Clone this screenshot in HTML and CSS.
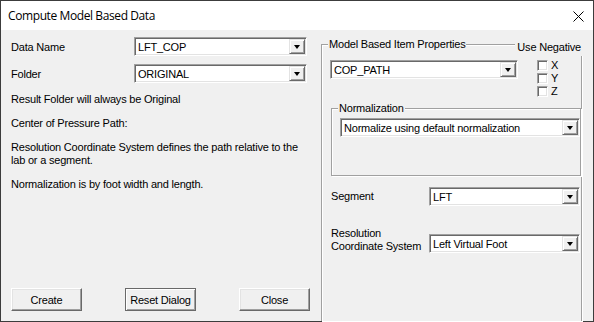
FILE: index.html
```html
<!DOCTYPE html>
<html lang="en">
<head>
    <meta charset="UTF-8">
    <title>Compute Model Based Data</title>
    <link rel="stylesheet" href="styles.css">
</head>
<body>
    <div class="dialog">
        <div class="titlebar">
            <span class="title">Compute Model Based Data</span>
            <svg class="close-icon" width="11" height="11" viewBox="0 0 11 11">
                <path d="M0.5 0.5 L10.5 10.5 M10.5 0.5 L0.5 10.5" stroke="#000" stroke-width="1" fill="none"/>
            </svg>
        </div>

        <div class="dialog-body">
            <div class="left-panel">
                <div class="field-row">
                    <span class="field-label">Data Name</span>
                    <div class="combo data-combo">
                        <span class="combo-text">LFT_COP</span>
                        <span class="combo-btn"><i class="arrow"></i></span>
                    </div>
                </div>
                <div class="field-row">
                    <span class="field-label">Folder</span>
                    <div class="combo data-combo">
                        <span class="combo-text">ORIGINAL</span>
                        <span class="combo-btn"><i class="arrow"></i></span>
                    </div>
                </div>

                <p class="note first">Result Folder will always be Original</p>
                <p class="note">Center of Pressure Path:</p>
                <p class="note">Resolution Coordinate System defines the path relative to the lab or a segment.</p>
                <p class="note">Normalization is by foot width and length.</p>

                <div class="buttons">
                    <button class="btn">Create</button>
                    <button class="btn btn-default">Reset Dialog</button>
                    <button class="btn">Close</button>
                </div>
            </div>

            <div class="group main-group">
                <span class="legend">Model Based Item Properties</span>
                <span class="use-negative">Use Negative</span>

                <div class="top-row">
                    <div class="combo item-combo">
                        <span class="combo-text">COP_PATH</span>
                        <span class="combo-btn"><i class="arrow"></i></span>
                    </div>
                    <div class="checks">
                        <label class="check"><span class="box"></span>X</label>
                        <label class="check"><span class="box"></span>Y</label>
                        <label class="check"><span class="box"></span>Z</label>
                    </div>
                </div>

                <div class="group norm-group">
                    <span class="legend">Normalization</span>
                    <div class="combo norm-combo">
                        <span class="combo-text">Normalize using default normalization</span>
                        <span class="combo-btn"><i class="arrow"></i></span>
                    </div>
                </div>

                <div class="prop-row segment-row">
                    <span class="prop-label">Segment</span>
                    <div class="combo prop-combo">
                        <span class="combo-text">LFT</span>
                        <span class="combo-btn"><i class="arrow"></i></span>
                    </div>
                </div>

                <div class="prop-row resolution-row">
                    <span class="prop-label">Resolution<br>Coordinate System</span>
                    <div class="combo prop-combo">
                        <span class="combo-text">Left Virtual Foot</span>
                        <span class="combo-btn"><i class="arrow"></i></span>
                    </div>
                </div>
            </div>
        </div>
    </div>
</body>
</html>
```

FILE: styles.css
```css
* {
    margin: 0;
    padding: 0;
    box-sizing: border-box;
}

body {
    background: #ffffff;
    font-family: "Liberation Sans", Arial, sans-serif;
    font-size: 11px;
    letter-spacing: -0.2px;
    color: #000;
}

.dialog {
    width: 594px;
    height: 322px;
    border: 1px solid #3c3c3c;
    display: flex;
    flex-direction: column;
    background: #f0f0f0;
}

.titlebar {
    height: 29px;
    background: #ffffff;
    display: flex;
    align-items: center;
    justify-content: space-between;
    padding: 0 9px 0 7px;
}

.title {
    font-family: "Open Sans", "Noto Sans", sans-serif;
    font-size: 12px;
    letter-spacing: -0.4px;
}

.close-icon {
    display: block;
    margin-top: 1px;
}

.dialog-body {
    flex: 1;
    display: flex;
}

/* left side */

.left-panel {
    width: 320px;
    padding: 7px 0 10px 10px;
    display: flex;
    flex-direction: column;
}

.field-row {
    display: flex;
    align-items: center;
    margin-bottom: 8px;
}

.field-label {
    width: 123px;
}

.note {
    line-height: 13px;
    width: 300px;
    margin-top: 11px;
}

.note.first {
    margin-top: 2px;
}

.buttons {
    margin-top: auto;
    display: flex;
    gap: 43px;
}

.btn {
    width: 71px;
    height: 23px;
    font-family: inherit;
    font-size: 11px;
    letter-spacing: -0.2px;
    background: #f0f0f0;
    border: 1px solid;
    border-color: #ffffff #696969 #696969 #ffffff;
    box-shadow: inset -1px -1px 0 #a0a0a0, inset 1px 1px 0 #e3e3e3;
    color: #000;
}

.btn-default {
    border-color: #696969;
    box-shadow: inset 1px 1px 0 #ffffff, inset -1px -1px 0 #a0a0a0;
}

/* combo boxes */

.combo {
    height: 19px;
    background: #ffffff;
    border: 1px solid;
    border-color: #a0a0a0 #ffffff #ffffff #a0a0a0;
    box-shadow: inset 1px 1px 0 #696969, inset -1px -1px 0 #e3e3e3;
    display: flex;
    align-items: center;
    padding: 1px 1px 1px 2px;
}

.combo-text {
    flex: 1;
    white-space: nowrap;
    overflow: hidden;
    padding-left: 1px;
}

.combo-btn {
    width: 16px;
    height: 15px;
    background: #f0f0f0;
    border: 1px solid;
    border-color: #e3e3e3 #696969 #696969 #e3e3e3;
    box-shadow: inset 1px 1px 0 #ffffff, inset -1px -1px 0 #a0a0a0;
    display: flex;
    align-items: center;
    justify-content: center;
}

.arrow {
    display: block;
    width: 0;
    height: 0;
    border-left: 3.5px solid transparent;
    border-right: 3.5px solid transparent;
    border-top: 4px solid #000;
    margin-top: 1px;
}

.data-combo {
    width: 173px;
}

/* group boxes */

.group {
    position: relative;
    border: 1px solid #a0a0a0;
    box-shadow: 1px 1px 0 #ffffff, inset 1px 1px 0 #ffffff;
}

.legend {
    position: absolute;
    top: -7px;
    left: 6px;
    padding: 0 1px;
    background: #f0f0f0;
    line-height: 13px;
}

.main-group {
    width: 261px;
    margin-top: 14px;
    border-bottom: none;
    padding: 14px 0 0 8px;
}

.use-negative {
    position: absolute;
    top: -4px;
    right: -2px;
    padding: 0 2px 2px 2px;
    background: #f0f0f0;
    line-height: 13px;
}

.top-row {
    display: flex;
    align-items: flex-start;
}

.item-combo {
    width: 188px;
    margin-top: 1px;
}

.checks {
    margin-left: 19px;
    display: flex;
    flex-direction: column;
}

.check {
    display: flex;
    align-items: center;
    height: 13px;
    line-height: 13px;
}

.box {
    width: 11px;
    height: 11px;
    margin-right: 3px;
    background: #ffffff;
    border: 1px solid;
    border-color: #a0a0a0 #ffffff #ffffff #a0a0a0;
    box-shadow: inset 1px 1px 0 #696969, inset -1px -1px 0 #e3e3e3;
}

.norm-group {
    width: 250px;
    height: 68px;
    margin: 10px 0 0 1px;
    padding: 9px 0 0 8px;
}

.norm-combo {
    width: 240px;
}

.prop-row {
    display: flex;
    margin-left: 1px;
}

.segment-row {
    align-items: center;
    margin-top: 11px;
}

.resolution-row {
    align-items: flex-end;
    margin-top: 21px;
}

.prop-label {
    width: 98px;
    line-height: 13px;
}

.prop-combo {
    width: 151px;
}
```
